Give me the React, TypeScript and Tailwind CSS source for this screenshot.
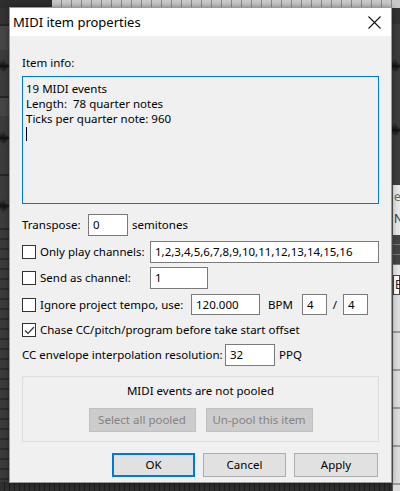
import React from "react";

const font = { fontFamily: '"Segoe UI", "Noto Sans", "Open Sans", sans-serif' };

function Checkbox({ checked = false }: { checked?: boolean }) {
  return (
    <div className="w-[14px] h-[14px] border border-[#333333] bg-white flex items-center justify-center shrink-0">
      {checked && (
        <svg width="11" height="9" viewBox="0 0 11 9">
          <path d="M1 4.5 L4 7.5 L10 1" fill="none" stroke="#333" strokeWidth="1.2" />
        </svg>
      )}
    </div>
  );
}

function Input({ value, w, h = 22 }: { value: string; w: number; h?: number }) {
  return (
    <div
      className="border border-[#7a7a7a] bg-white flex items-center pl-[4px] text-black shrink-0 whitespace-nowrap overflow-hidden"
      style={{ width: w, height: h }}
    >
      {value}
    </div>
  );
}

function Wave() {
  return (
    <svg width="9" height="24" viewBox="0 0 9 24" className="block">
      <path
        d="M0 12 L1 6 L2 16 L3 4 L4 19 L5 7 L6 17 L7 9 L8 14 L9 12 L8 10 L7 15 L6 8 L5 18 L4 5 L3 20 L2 8 L1 17 Z"
        fill="#111"
      />
    </svg>
  );
}

export default function App() {
  return (
    <div className="relative w-[400px] h-[491px] bg-[#3a3a3a] overflow-hidden" style={font}>
      {/* background: top ruler */}
      <div className="absolute left-0 top-0 w-[400px] h-[8px] flex">
        <div className="w-[52px] h-full bg-[#2e2e2e]" />
        <div className="flex-1 h-full bg-[#c9c9c9] bg-[repeating-linear-gradient(90deg,#c9c9c9_0px,#c9c9c9_9px,#8a8a8a_9px,#8a8a8a_10px)]" />
      </div>
      {/* left strip */}
      <div className="absolute left-0 top-[8px] w-[9px] h-[483px] flex flex-col bg-[#3c3c3c]">
        <div className="h-[16px] bg-[#333]" />
        <div className="h-[2px] bg-[#262626]" />
        <div className="h-[24px] bg-[#454545]" />
        <div className="mt-[4px]"><Wave /></div>
        <div className="h-[18px]" />
        <div className="h-[2px] bg-[#262626]" />
        <div className="h-[18px] bg-[#454545]" />
        <div className="mt-[10px]"><Wave /></div>
        <div className="h-[24px]" />
        <div className="h-[2px] bg-[#262626]" />
        <div className="mt-[18px]"><Wave /></div>
        <div className="h-[10px]" />
        <div className="h-[2px] bg-[#262626]" />
        <div className="flex-1 bg-[#3a3a3a] bg-[repeating-linear-gradient(180deg,#3a3a3a_0px,#3a3a3a_8px,#2a2a2a_8px,#2a2a2a_10px)]" />
      </div>
      {/* right strip */}
      <div className="absolute left-[392px] top-[8px] w-[8px] h-[483px] flex flex-col">
        <div className="h-[177px] bg-[#3c3c3c] flex flex-col">
          <div className="h-[16px] bg-[#333]" />
          <div className="mt-[30px]"><Wave /></div>
          <div className="mt-[40px]"><Wave /></div>
        </div>
        <div className="flex-1 bg-[#e6e6e6] border-l border-[#555] flex flex-col text-[12px] text-[#666] overflow-hidden">
          <div className="pl-[1px] leading-[16px] mt-[4px]">e</div>
          <div className="pl-[1px] leading-[16px] mt-[6px] text-[#333]">N</div>
          <div className="h-[30px] mt-[8px] bg-[#555] bg-[repeating-linear-gradient(180deg,#444_0px,#444_9px,#777_9px,#777_10px)]" />
          <div className="h-[10px]" />
          <div className="h-[20px] border border-[#444] bg-white text-[#222] pl-[1px] leading-[18px]">E</div>
          <div className="flex-1 bg-[repeating-linear-gradient(180deg,#dcdcdc_0px,#dcdcdc_36px,#9a9a9a_36px,#9a9a9a_38px)]" />
        </div>
      </div>
      {/* bottom strip */}
      <div className="absolute left-0 top-[482px] w-[392px] h-[9px] bg-[#2f2f2f] bg-[repeating-linear-gradient(90deg,#2f2f2f_0px,#2f2f2f_4px,#1c1c1c_4px,#1c1c1c_5px)]" />

      {/* dialog */}
      <div className="absolute left-[9px] top-[7px] w-[383px] h-[476px] border border-[#9a9a9a] bg-[#f0f0f0] flex flex-col shadow-[0_0_6px_rgba(0,0,0,0.4)]">
        <div className="h-[28px] bg-white flex items-center justify-between pl-[3px] pr-[10px] shrink-0">
          <span className="text-[13px] text-black leading-none whitespace-nowrap">MIDI item properties</span>
          <svg width="13" height="13" viewBox="0 0 13 13">
            <path d="M0.5 0.5 L12.5 12.5 M12.5 0.5 L0.5 12.5" stroke="#111" strokeWidth="1.1" />
          </svg>
        </div>
        <div className="flex flex-col pl-[12px] pr-[12px] text-[11.5px] text-black whitespace-nowrap">
          <div className="mt-[19px] h-[16px] leading-[16px]">Item info:</div>
          <div className="mt-[5px] h-[128px] w-[357px] border border-[#0078d7] bg-[#f0f0f0] pl-[3px] pt-[4px] leading-[15px]">
            <div>19 MIDI events</div>
            <div>Length:&nbsp; 78 quarter notes</div>
            <div>Ticks per quarter note: 960</div>
            <div className="w-[1px] h-[14px] bg-black mt-[1px]" />
          </div>

          <div className="mt-[10px] h-[22px] flex items-center">
            <span className="w-[66px]">Transpose:</span>
            <Input value="0" w={40} />
            <span className="ml-[4px]">semitones</span>
          </div>

          <div className="mt-[5px] h-[22px] flex items-center">
            <Checkbox />
            <span className="ml-[4px] w-[110px]">Only play channels:</span>
            <Input value="1,2,3,4,5,6,7,8,9,10,11,12,13,14,15,16" w={229} />
          </div>

          <div className="mt-[4px] h-[22px] flex items-center">
            <Checkbox />
            <span className="ml-[4px] w-[110px]">Send as channel:</span>
            <Input value="1" w={58} />
          </div>

          <div className="mt-[5px] h-[21px] flex items-center">
            <Checkbox />
            <span className="ml-[4px] w-[151px]">Ignore project tempo, use:</span>
            <Input value="120.000" w={69} h={21} />
            <span className="ml-[8px] w-[34px]">BPM</span>
            <Input value="4" w={25} h={21} />
            <span className="w-[16px] text-center">/</span>
            <Input value="4" w={25} h={21} />
          </div>

          <div className="mt-[5px] h-[20px] flex items-center">
            <Checkbox checked />
            <span className="ml-[4px]">Chase CC/pitch/program before take start offset</span>
          </div>

          <div className="mt-[4px] h-[22px] flex items-center">
            <span className="w-[203px]">CC envelope interpolation resolution:</span>
            <Input value="32" w={50} />
            <span className="ml-[4px]">PPQ</span>
          </div>

          <div className="mt-[10px] h-[66px] w-[357px] border border-[#dcdcdc] flex flex-col items-center">
            <div className="mt-[6px] h-[16px] leading-[16px]">MIDI events are not pooled</div>
            <div className="mt-[9px] flex gap-[10px]">
              <div className="w-[107px] h-[24px] bg-[#cccccc] border border-[#bfbfbf] text-[#838383] flex items-center justify-center">
                Select all pooled
              </div>
              <div className="w-[107px] h-[24px] bg-[#cccccc] border border-[#bfbfbf] text-[#838383] flex items-center justify-center">
                Un-pool this item
              </div>
            </div>
          </div>

          <div className="mt-[11px] flex gap-[8px] justify-end pr-[1px]">
            <div className="w-[83px] h-[24px] bg-[#e1e1e1] border-2 border-[#0078d7] flex items-center justify-center">OK</div>
            <div className="w-[83px] h-[24px] bg-[#e1e1e1] border border-[#adadad] flex items-center justify-center">Cancel</div>
            <div className="w-[84px] h-[24px] bg-[#e1e1e1] border border-[#adadad] flex items-center justify-center">Apply</div>
          </div>
        </div>
      </div>
    </div>
  );
}
